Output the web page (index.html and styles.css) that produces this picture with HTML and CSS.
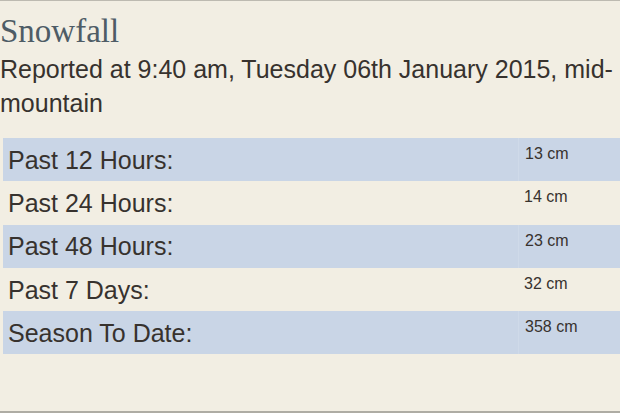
FILE: index.html
```html
<!DOCTYPE html>
<html lang="en">
<head>
<meta charset="utf-8">
<title>Snowfall</title>
<link rel="stylesheet" href="styles.css">
</head>
<body>
<div class="panel">
  <h2 class="title">Snowfall</h2>
  <p class="report">Reported at 9:40 am, Tuesday 06th January 2015, mid-mountain</p>
  <div class="stats">
    <div class="row alt"><div class="label">Past 12 Hours:</div><div class="value">13 cm</div></div>
    <div class="row"><div class="label">Past 24 Hours:</div><div class="value">14 cm</div></div>
    <div class="row alt"><div class="label">Past 48 Hours:</div><div class="value">23 cm</div></div>
    <div class="row"><div class="label">Past 7 Days:</div><div class="value">32 cm</div></div>
    <div class="row alt"><div class="label">Season To Date:</div><div class="value">358 cm</div></div>
  </div>
</div>
</body>
</html>
```
FILE: styles.css
```css
html, body {
  margin: 0;
  padding: 0;
  background: #f2eee3;
}
body {
  width: 620px;
  height: 413px;
  overflow: hidden;
}
.panel {
  box-sizing: border-box;
  height: 413px;
  border-top: 1px solid #bdbab1;
  border-bottom: 2px solid #aeaca4;
  padding-top: 10px;
}
.title {
  margin: 0;
  font-family: "Liberation Serif", "Times New Roman", serif;
  font-weight: normal;
  font-size: 33px;
  line-height: 41px;
  color: #4e5c66;
  padding-left: 0;
}
.report {
  margin: 0;
  font-family: "Liberation Sans", Arial, sans-serif;
  font-size: 25px;
  line-height: 34px;
  color: #37322e;
  width: 620px;
}
.stats {
  margin: 18px 0 0 3px;
  font-family: "Liberation Sans", Arial, sans-serif;
  color: #37322e;
}
.row {
  display: grid;
  grid-template-columns: 515px 1fr;
  height: 43.3px;
}
.row.alt {
  background: #c9d5e6;
}
.label {
  font-size: 25px;
  line-height: 28px;
  padding-left: 5px;
  align-self: center;
}
.value {
  font-size: 16px;
  line-height: 18px;
  padding: 7px 0 0 6px;
}
.row.alt .value {
  border-left: 1px solid rgba(255, 255, 255, 0.12);
}
```
